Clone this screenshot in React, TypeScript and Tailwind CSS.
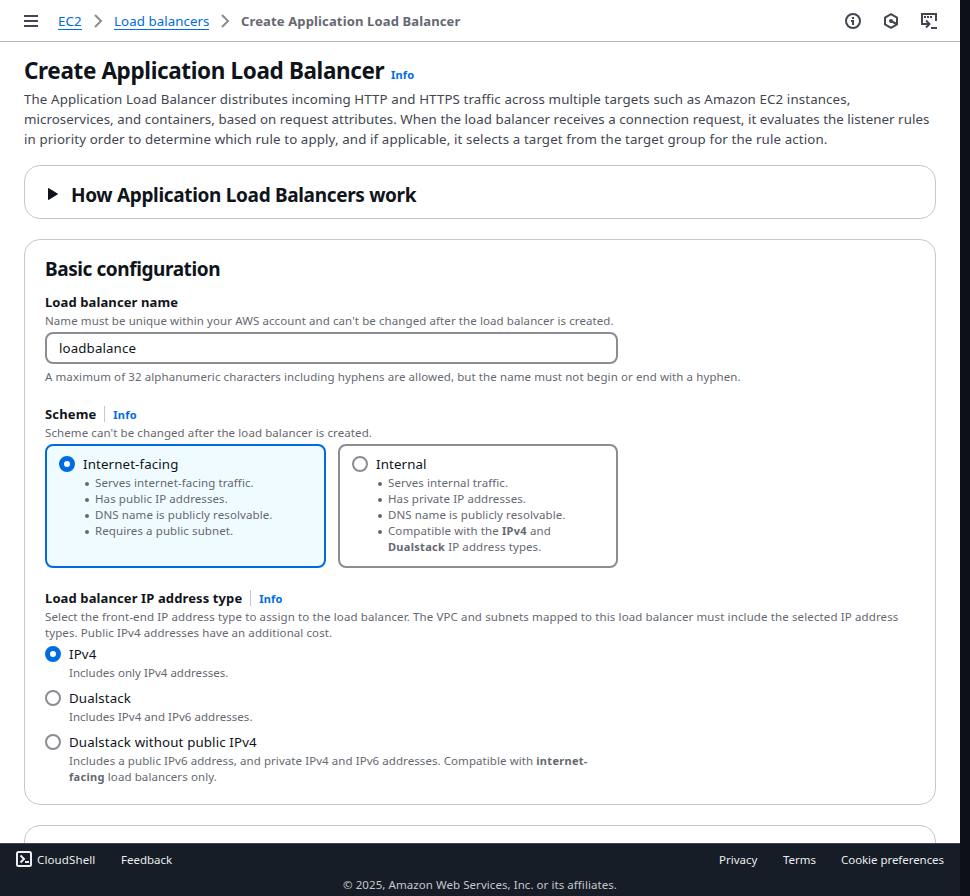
import React from "react";

const line = "block whitespace-nowrap";
const help = "text-[11.5px] leading-4 tracking-[0.09px] text-[#656871]";
const strong = "text-[11px] font-bold tracking-[0.3px]";

function Info({ className = "" }: { className?: string }) {
  return (
    <a className={`text-[11px] leading-5 font-bold tracking-[0.2px] text-[#006ce0] ${className}`} href="#">
      Info
    </a>
  );
}

function Radio({ on = false }: { on?: boolean }) {
  return (
    <span
      className={`mt-[2px] block size-4 shrink-0 rounded-full bg-white ${
        on ? "border-5 border-[#006ce0]" : "border-2 border-[#8c8c94]"
      }`}
    />
  );
}

function Chevron() {
  return (
    <svg width="16" height="16" viewBox="0 0 16 16" fill="none" stroke="#8c8c94" strokeWidth="2">
      <path d="m5 2 6 6-6 6" />
    </svg>
  );
}

function Option({ on, title, gap, children }: { on?: boolean; title: string; gap?: string; children: React.ReactNode }) {
  return (
    <div className={`flex gap-2 ${gap ?? ""}`}>
      <Radio on={on} />
      <div>
        <div className="text-[13.3px] leading-5 tracking-[0.13px] whitespace-nowrap text-[#0f141a]">{title}</div>
        <div className={`mt-px ${help}`}>{children}</div>
      </div>
    </div>
  );
}

function Bullet({ children }: { children: React.ReactNode }) {
  return (
    <li className="flex whitespace-nowrap">
      <span className="mt-[7px] mr-[6px] ml-[2px] size-1 shrink-0 rounded-full bg-[#656871]" />
      <span>{children}</span>
    </li>
  );
}

function Header() {
  return (
    <header className="flex h-[42px] shrink-0 items-center border-b border-[#b4b4bb] pr-[23px] pl-[23px]">
      <svg width="16" height="16" viewBox="0 0 16 16" fill="none" stroke="#424650" strokeWidth="2">
        <path d="M1 3h14M1 8h14M1 13h14" />
      </svg>
      <nav className="ml-[19px] flex items-center text-[13.3px] leading-5 whitespace-nowrap">
        <a href="#" className="h-[18px] w-[24px] border-b border-[#006ce0] leading-[18px] tracking-[0.1px] text-[#006ce0]">EC2</a>
        <span className="mx-2"><Chevron /></span>
        <a href="#" className="h-[18px] w-[95px] border-b border-[#006ce0] leading-[18px] tracking-[0.06px] text-[#006ce0]">Load balancers</a>
        <span className="mx-2"><Chevron /></span>
        <span className="text-[13px] font-bold tracking-[0.14px] text-[#656871]">Create Application Load Balancer</span>
      </nav>
      <div className="ml-auto flex items-center gap-[22px]">
        <svg width="16" height="16" viewBox="0 0 16 16" fill="none" stroke="#424650" strokeWidth="2">
          <circle cx="8" cy="8" r="7" />
          <path d="M8 4v2M6 8h2M8 7v5" />
        </svg>
        <svg width="16" height="16" viewBox="0 0 16 16" fill="none" stroke="#424650" strokeWidth="2">
          <path d="M8 1.200 14 4.600v6.800L8 14.800 2 11.400V4.600z" strokeLinejoin="round" />
          <circle cx="8" cy="8" r="2" fill="#424650" stroke="none" />
          <path d="m8 8 5.500 3" />
        </svg>
        <svg width="16" height="16" viewBox="0 0 16 16" fill="none" stroke="#424650" strokeWidth="2">
          <path d="M15 8V1H1v10h7M5 7.500 8.500 11 5 14.500M10 15h6" />
          <path d="M3 4h2M6 4h2M9 4h2" />
        </svg>
      </div>
    </header>
  );
}

export default function App() {
  return (
    <div className="flex h-[896px] w-[970px] overflow-hidden bg-[#0d1017] font-['Noto_Sans','Open_Sans',sans-serif]">
      <div className="flex w-[960px] shrink-0 flex-col bg-white">
        <Header />
        <main className="min-h-0 flex-1 overflow-hidden px-6 pt-[13px] text-[#0f141a]">
          <div className="flex h-[30px] items-center whitespace-nowrap">
            <h1 className="mt-[2px] w-[359px] text-[22.5px] leading-[30px] font-bold tracking-[-0.37px]">Create Application Load Balancer</h1>
            <Info className="mt-[9px] ml-2" />
          </div>
          <p className="mt-[4px] text-[13.3px] leading-5 text-[#424650]">
            <span className={`${line} tracking-[0.12px]`}>The Application Load Balancer distributes incoming HTTP and HTTPS traffic across multiple targets such as Amazon EC2 instances,</span>
            <span className={`${line} tracking-[0.06px]`}>microservices, and containers, based on request attributes. When the load balancer receives a connection request, it evaluates the listener rules</span>
            <span className={`${line} tracking-[0.12px]`}>in priority order to determine which rule to apply, and if applicable, it selects a target from the target group for the rule action.</span>
          </p>

          <section className="mt-4 flex h-[54px] items-center rounded-2xl border border-[#c6c6cd] pl-[23px]">
            <svg className="mt-[3px]" width="10" height="12" viewBox="0 0 10 12" fill="#0f141a" stroke="#0f141a" strokeLinejoin="round">
              <path d="M.5.5v11l9-5.500z" />
            </svg>
            <h2 className="mt-[5px] ml-[13px] text-[19px] leading-6 font-bold tracking-[-0.33px] whitespace-nowrap">How Application Load Balancers work</h2>
          </section>

          <section className="mt-5 h-[566px] rounded-2xl border border-[#c6c6cd] px-5 pt-[17px]">
            <h2 className="text-[19px] leading-6 font-bold tracking-[-0.42px] whitespace-nowrap">Basic configuration</h2>

            <div className="mt-[11px] text-[13px] leading-5 font-bold tracking-[0.1px]">Load balancer name</div>
            <div className={`mt-px whitespace-nowrap ${help}`}>
              Name must be unique within your AWS account and can't be changed after the load balancer is created.
            </div>
            <div className="mt-[3px] flex h-8 w-[573px] items-center rounded-lg border-2 border-[#8c8c94] pt-px pl-3 text-[13.3px] tracking-[0.12px]">loadbalance</div>
            <div className={`mt-[5px] whitespace-nowrap ${help}`}>
              A maximum of 32 alphanumeric characters including hyphens are allowed, but the name must not begin or end with a hyphen.
            </div>

            <div className="mt-[19px] flex items-center text-[13px] leading-5 font-bold tracking-[0.14px] whitespace-nowrap">
              Scheme
              <span className="mr-2 ml-2 h-4 w-px bg-[#c6c6cd]" />
              <Info className="h-5 leading-[22px]" />
            </div>
            <div className={`mt-px whitespace-nowrap ${help}`}>
              Scheme can't be changed after the load balancer is created.
            </div>
            <div className="mt-[3px] flex h-[124px] gap-3">
              <div className="w-[281px] rounded-lg border-2 border-[#006ce0] bg-[#f0fbff] px-3 py-2">
                <Option on title="Internet-facing">
                  <ul>
                    <Bullet>Serves internet-facing traffic.</Bullet>
                    <Bullet>Has public IP addresses.</Bullet>
                    <Bullet>DNS name is publicly resolvable.</Bullet>
                    <Bullet>Requires a public subnet.</Bullet>
                  </ul>
                </Option>
              </div>
              <div className="w-[280px] rounded-lg border-2 border-[#8c8c94] px-3 py-2">
                <Option title="Internal">
                  <ul>
                    <Bullet>Serves internal traffic.</Bullet>
                    <Bullet>Has private IP addresses.</Bullet>
                    <Bullet>DNS name is publicly resolvable.</Bullet>
                    <Bullet>
                      Compatible with the <b className={strong}>IPv4</b> and
                      <br />
                      <b className={strong}>Dualstack</b> IP address types.
                    </Bullet>
                  </ul>
                </Option>
              </div>
            </div>

            <div className="mt-5 flex items-center text-[13px] leading-5 font-bold tracking-[0.11px] whitespace-nowrap">
              Load balancer IP address type
              <span className="mr-2 ml-2 h-4 w-px bg-[#c6c6cd]" />
              <Info className="h-5 leading-[22px]" />
            </div>
            <div className={`mt-px mb-[3px] ${help}`}>
              <span className={`${line} tracking-[0.12px]`}>Select the front-end IP address type to assign to the load balancer. The VPC and subnets mapped to this load balancer must include the selected IP address</span>
              <span className={line}>types. Public IPv4 addresses have an additional cost.</span>
            </div>
            <Option on title="IPv4">
              <span className={`${line} tracking-[0.03px]`}>Includes only IPv4 addresses.</span>
            </Option>
            <Option title="Dualstack" gap="mt-[7px]">
              <span className={`${line} tracking-[0.03px]`}>Includes IPv4 and IPv6 addresses.</span>
            </Option>
            <Option title="Dualstack without public IPv4" gap="mt-[7px]">
              <span className={`${line} tracking-[0.07px]`}>
                Includes a public IPv6 address, and private IPv4 and IPv6 addresses. Compatible with <b className={strong}>internet-</b>
              </span>
              <span className={line}><b className={strong}>facing</b> load balancers only.</span>
            </Option>
          </section>

          <section className="mt-5 h-20 rounded-2xl border border-[#c6c6cd]" />
        </main>
        <footer className="h-[53px] shrink-0 border-t border-[#424650] bg-[#161d26] px-4 text-[11.5px] text-[#ebebf0]">
          <div className="flex h-8 items-center whitespace-nowrap">
            <svg className="-mt-[2px]" width="16" height="16" viewBox="0 0 16 16" fill="none" stroke="#ebebf0" strokeWidth="2">
              <rect x="1" y="1" width="14" height="14" rx="1.500" />
              <path d="m4.500 4.500 3.500 3.500-3.500 3.500M9 11h4" />
            </svg>
            <span className="ml-[5px] w-[59px] tracking-[0.12px]">CloudShell</span>
            <span className="ml-[25px]">Feedback</span>
            <span className="ml-auto w-[39px]">Privacy</span>
            <span className="ml-[25px] w-[33px]">Terms</span>
            <span className="ml-[25px] w-[103px] tracking-[-0.05px]">Cookie preferences</span>
          </div>
          <div className="text-center leading-[18px] tracking-[0.06px] text-[#c6c6cd]">© 2025, Amazon Web Services, Inc. or its affiliates.</div>
        </footer>
      </div>
    </div>
  );
}
